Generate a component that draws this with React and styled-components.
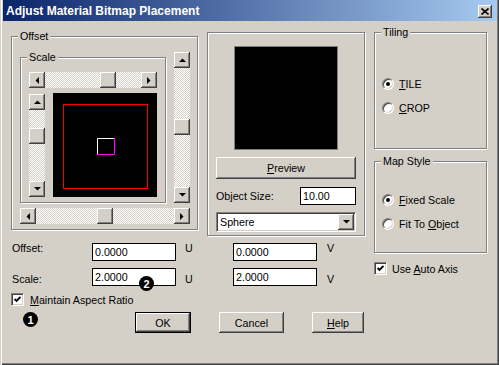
import React from 'react';
import styled, { createGlobalStyle, css } from 'styled-components';

const GlobalStyle = createGlobalStyle`
	html, body {
		margin: 0;
		padding: 0;
		background: #d4d0c8;
	}
	body {
		font-family: "Liberation Sans", Arial, sans-serif;
		font-size: 10.7px;
		color: #000;
	}
`;

const raised = css`
	background: #d4d0c8;
	box-shadow: inset -1px -1px #404040, inset 1px 1px #fff, inset -2px -2px #808080;
`;

const sunken = css`
	border: 1px solid;
	border-color: #808080 #fff #fff #808080;
	box-shadow: inset 1px 1px #404040, inset -1px -1px #d4d0c8;
`;

const Window = styled.div`
	position: relative;
	width: 499px;
	height: 365px;
	box-sizing: border-box;
	padding: 0 2px 2px 3px;
	overflow: hidden;
	background: #d4d0c8;
	box-shadow: inset 1px 0 #d4d0c8, inset 2px 0 #fff, inset -1px -1px #404040, inset -2px -2px #808080;
`;

const TitleBar = styled.div`
	display: flex;
	align-items: center;
	height: 21px;
	padding: 0 5px 0 3px;
	background: linear-gradient(to right, #0a246a, #a6caf0);
`;

const Title = styled.div`
	flex: 1;
	padding-top: 1px;
	color: #fff;
	font-weight: bold;
	font-size: 12px;
	white-space: nowrap;
`;

const CloseBtn = styled.div`
	width: 14px;
	height: 13px;
	margin-top: 1px;
	display: flex;
	align-items: center;
	justify-content: center;
	${raised}
`;

const Body = styled.div`
	display: flex;
	align-items: flex-start;
	padding: 5px 0 0 8px;
`;

const Main = styled.div`
	display: flex;
	flex-direction: column;
	width: 354px;
`;

const TopRow = styled.div`
	display: flex;
	align-items: flex-start;
	gap: 9px;
`;

const Side = styled.div`
	display: flex;
	flex-direction: column;
	margin-left: 9px;
	width: 113px;
`;

// etched group box, legend sits on the top line
const Group = styled.fieldset`
	margin: ${(p) => p.$mt || 0}px 0 0;
	padding: 0;
	min-width: 0;
	width: ${(p) => p.$w}px;
	box-sizing: border-box;
	border: 1px solid #808080;
	box-shadow: inset 1px 1px #fff, 1px 1px #fff;
`;

const Legend = styled.legend`
	margin-left: 6px;
	padding: 0 2px;
	line-height: 13px;
	background: #d4d0c8;
`;

const OffsetInner = styled.div`
	display: grid;
	grid-template-columns: 146px 16px;
	column-gap: 8px;
	row-gap: 5px;
	align-items: start;
	padding: 8px 0 5px 8px;
`;

const ScaleInner = styled.div`
	display: grid;
	grid-template-columns: 16px 104px;
	column-gap: 8px;
	row-gap: 5px;
	align-items: start;
	padding: 8px 0 5px 8px;
`;

const SpanAll = styled.div`
	grid-column: 1 / -1;
`;

const Bar = styled.div`
	display: flex;
	flex-direction: ${(p) => (p.$vertical ? 'column' : 'row')};
	width: ${(p) => (p.$vertical ? 16 : p.$length)}px;
	height: ${(p) => (p.$vertical ? p.$length : 16)}px;
	margin-top: ${(p) => p.$mt || 0}px;
`;

const Track = styled.div`
	flex: 1;
	display: flex;
	flex-direction: ${(p) => (p.$vertical ? 'column' : 'row')};
	background-color: #fff;
	background-image: conic-gradient(#fff 25%, #d4d0c8 0 50%, #fff 0 75%, #d4d0c8 0);
	background-size: 2px 2px;
`;

const ScrollBtn = styled.div`
	flex: none;
	width: 16px;
	height: 16px;
	box-sizing: border-box;
	display: flex;
	align-items: center;
	justify-content: center;
	${raised}
`;

const Thumb = styled(ScrollBtn)`
	${(p) => (p.$vertical ? 'margin-top' : 'margin-left')}: ${(p) => p.$at}px;
`;

const Tri = ({ dir }) => {
	const vert = dir === 'up' || dir === 'down';
	const pts = {
		up: '0,4 7,4 3.5,0.5',
		down: '0,0 7,0 3.5,3.5',
		left: '4,0 4,7 0.5,3.5',
		right: '0,0 0,7 3.5,3.5',
	}[dir];
	return (
		<svg width={vert ? 7 : 4} height={vert ? 4 : 7} viewBox={vert ? '0 0 7 4' : '0 0 4 7'}>
			<polygon points={pts} fill="#000" />
		</svg>
	);
};

const ScrollBar = ({ vertical, length, at, mt }) => (
	<Bar $vertical={vertical} $length={length} $mt={mt}>
		<ScrollBtn>
			<Tri dir={vertical ? 'up' : 'left'} />
		</ScrollBtn>
		<Track $vertical={vertical}>
			<Thumb $vertical={vertical} $at={at} />
		</Track>
		<ScrollBtn>
			<Tri dir={vertical ? 'down' : 'right'} />
		</ScrollBtn>
	</Bar>
);

const Canvas = () => (
	<svg width="104" height="104" viewBox="0 0 104 104" style={{ display: 'block' }}>
		<rect width="104" height="104" fill="#000" />
		<rect x="10.5" y="11.5" width="84" height="84" fill="none" stroke="#ff0000" />
		<path d="M44.5 62 V45.5 H61" stroke="#fff" fill="none" />
		<path d="M61.5 45 V61.5 H44" stroke="#ff00ff" fill="none" />
	</svg>
);

const Frame = styled.div`
	margin-top: 6px;
	width: 158px;
	box-sizing: border-box;
	display: flex;
	flex-direction: column;
	padding: 13px 8px 3px;
	border: 1px solid #808080;
	box-shadow: inset 1px 1px #fff, 1px 1px #fff;
`;

const PreviewBox = styled.div`
	align-self: center;
	width: 104px;
	height: 104px;
	box-sizing: border-box;
	background: #000;
	border: 1px solid #808080;
`;

const PushButton = styled.div`
	box-sizing: border-box;
	height: ${(p) => p.$h || 21}px;
	width: ${(p) => (p.$w ? `${p.$w}px` : 'auto')};
	margin-top: ${(p) => p.$mt || 0}px;
	display: flex;
	align-items: center;
	justify-content: center;
	${raised}
	${(p) =>
		p.$default &&
		css`
			border: 1px solid #000;
		`}
`;

const SizeRow = styled.div`
	display: flex;
	align-items: center;
	justify-content: space-between;
	margin-top: 8px;
`;

const Edit = styled.div`
	box-sizing: border-box;
	width: ${(p) => p.$w}px;
	height: 18px;
	padding-left: 2px;
	display: flex;
	align-items: center;
	background: #fff;
	border: 1px solid #000;
`;

const Combo = styled.div`
	margin-top: 7px;
	height: 20px;
	box-sizing: border-box;
	display: flex;
	align-items: center;
	background: #fff;
	${sunken}
`;

const ComboText = styled.span`
	flex: 1;
	padding-left: 3px;
`;

const ComboBtn = styled(ScrollBtn)`
	height: 16px;
	margin-right: 1px;
`;

const Inner = styled.div`
	display: flex;
	flex-direction: column;
	gap: 11px;
	padding: ${(p) => p.$pad};
`;

const Option = styled.div`
	display: flex;
	align-items: center;
	gap: 5px;
	height: 13px;
`;

const RadioDot = styled.span`
	flex: none;
	width: 12px;
	height: 12px;
	box-sizing: border-box;
	border-radius: 50%;
	display: flex;
	align-items: center;
	justify-content: center;
	background: #fff;
	border: 1px solid;
	border-color: #808080 #fff #fff #808080;
	box-shadow: inset 1px 1px #404040, inset -1px -1px #d4d0c8;

	&::after {
		content: '';
		width: 4px;
		height: 4px;
		border-radius: 50%;
		background: ${(p) => (p.$on ? '#000' : 'transparent')};
	}
`;

const CheckRow = styled.div`
	display: flex;
	align-items: center;
	gap: ${(p) => p.$gap || 5}px;
	height: 13px;
	margin-top: ${(p) => p.$mt || 0}px;
`;

const CheckBox = styled.span`
	flex: none;
	width: 13px;
	height: 13px;
	box-sizing: border-box;
	display: flex;
	align-items: center;
	justify-content: center;
	background: #fff;
	${sunken}
`;

const Tick = () => (
	<svg width="7" height="7" viewBox="0 0 7 7">
		<polyline points="0.5,3 2.5,5 6.5,1" fill="none" stroke="#000" strokeWidth="1.9" />
	</svg>
);

const Fields = styled.div`
	display: grid;
	grid-template-columns: 81px 84px 57px 84px auto;
	grid-auto-rows: 18px;
	row-gap: 7px;
	margin-top: 7px;
`;

const FieldLabel = styled.span`
	align-self: start;
	line-height: 11px;
	padding-top: ${(p) => (p.$low ? 6 : 0)}px;
	padding-left: ${(p) => p.$pl || 0}px;
`;

const Buttons = styled.div`
	display: flex;
	gap: 28px;
	margin-top: 6px;
	padding-left: 124px;
`;

const Badge = styled.div`
	position: absolute;
	left: ${(p) => p.$x}px;
	top: ${(p) => p.$y}px;
	width: 15px;
	height: 15px;
	border-radius: 50%;
	background: #000;
	color: #fff;
	font-weight: bold;
	font-size: 11px;
	display: flex;
	align-items: center;
	justify-content: center;
`;

const App = () => {
	return (
		<>
			<GlobalStyle />
			<Window>
				<TitleBar>
					<Title>Adjust Material Bitmap Placement</Title>
					<CloseBtn>
						<svg width="8" height="7" viewBox="0 0 8 7">
							<path d="M0.5 0.5 L7.5 6.5 M7.5 0.5 L0.5 6.5" stroke="#000" strokeWidth="1.6" />
						</svg>
					</CloseBtn>
				</TitleBar>

				<Body>
					<Main>
						<TopRow>
							<Group $w={187} $mt={4}>
								<Legend>Offset</Legend>
								<OffsetInner>
									<Group $w={146}>
										<Legend>Scale</Legend>
										<ScaleInner>
											<SpanAll>
												<ScrollBar length={128} at={55} />
											</SpanAll>
											<ScrollBar vertical length={103} at={18} mt={1} />
											<Canvas />
										</ScaleInner>
									</Group>
									<ScrollBar vertical length={151} at={51} mt={1} />
									<SpanAll>
										<ScrollBar length={170} at={61} />
									</SpanAll>
								</OffsetInner>
							</Group>

							<Frame>
								<PreviewBox />
								<PushButton $h={22} $mt={7}>
									<span>
										<u>P</u>review
									</span>
								</PushButton>
								<SizeRow>
									<span>Object Size:</span>
									<Edit $w={56}>10.00</Edit>
								</SizeRow>
								<Combo>
									<ComboText>Sphere</ComboText>
									<ComboBtn>
										<Tri dir="down" />
									</ComboBtn>
								</Combo>
							</Frame>
						</TopRow>

						<Fields>
							<FieldLabel $pl={1}>Offset:</FieldLabel>
							<Edit $w={84}>0.0000</Edit>
							<FieldLabel $pl={9}>U</FieldLabel>
							<Edit $w={84}>0.0000</Edit>
							<FieldLabel $pl={10}>V</FieldLabel>

							<FieldLabel $pl={1} $low>
								Scale:
							</FieldLabel>
							<Edit $w={84}>2.0000</Edit>
							<FieldLabel $pl={9} $low>
								U
							</FieldLabel>
							<Edit $w={84}>2.0000</Edit>
							<FieldLabel $pl={10} $low>
								V
							</FieldLabel>
						</Fields>

						<CheckRow $mt={7} $gap={6}>
							<CheckBox>
								<Tick />
							</CheckBox>
							<span>
								<u>M</u>aintain Aspect Ratio
							</span>
						</CheckRow>

						<Buttons>
							<PushButton $w={56} $default>
								OK
							</PushButton>
							<PushButton $w={65}>Cancel</PushButton>
							<PushButton $w={52}>
								<span>
									<u>H</u>elp
								</span>
							</PushButton>
						</Buttons>
					</Main>

					<Side>
						<Group $w={113}>
							<Legend>Tiling</Legend>
							<Inner $pad="38px 0 34px 7px">
								<Option>
									<RadioDot $on />
									<span>
										<u>T</u>ILE
									</span>
								</Option>
								<Option>
									<RadioDot />
									<span>
										<u>C</u>ROP
									</span>
								</Option>
							</Inner>
						</Group>

						<Group $w={113} $mt={6}>
							<Legend>Map Style</Legend>
							<Inner $pad="25px 0 22px 7px">
								<Option>
									<RadioDot $on />
									<span>
										<u>F</u>ixed Scale
									</span>
								</Option>
								<Option>
									<RadioDot />
									<span>
										Fit To <u>O</u>bject
									</span>
								</Option>
							</Inner>
						</Group>

						<CheckRow $mt={9}>
							<CheckBox>
								<Tick />
							</CheckBox>
							<span>
								Use <u>A</u>uto Axis
							</span>
						</CheckRow>
					</Side>
				</Body>

				<Badge $x={23} $y={312}>1</Badge>
				<Badge $x={139} $y={276}>2</Badge>
			</Window>
		</>
	);
};

export default App;
